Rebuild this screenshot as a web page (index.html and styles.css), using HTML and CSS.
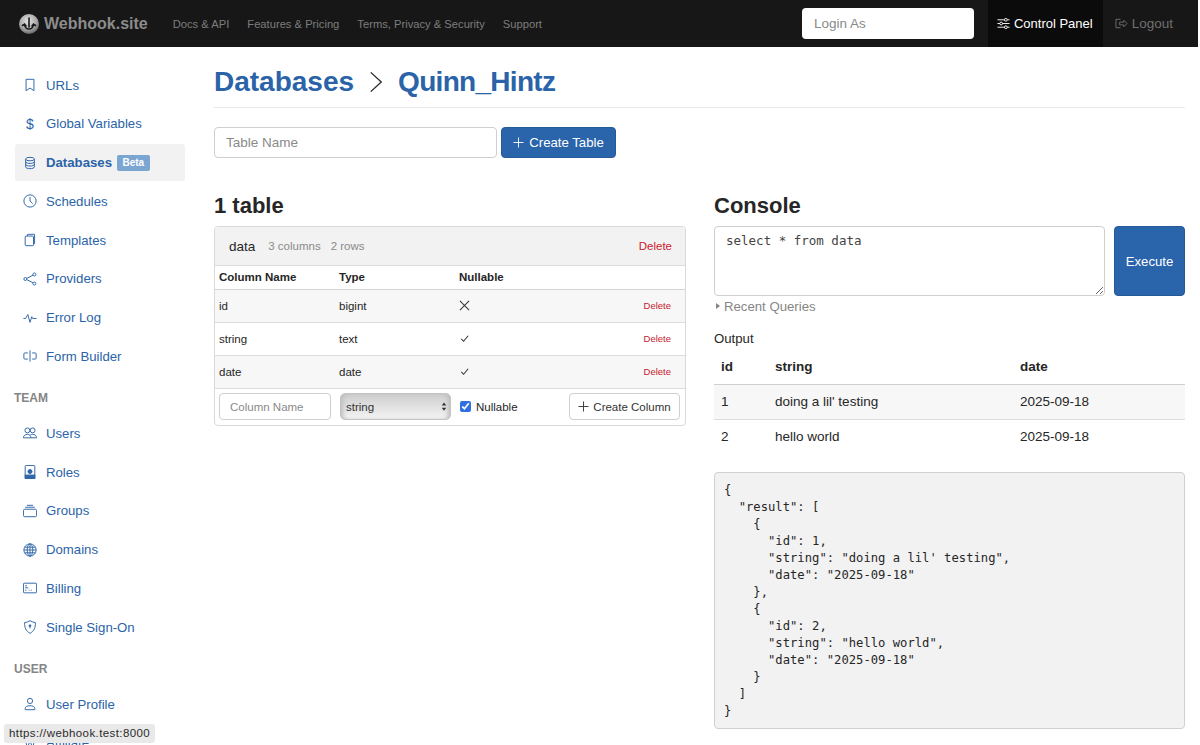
FILE: index.html
```html
<!DOCTYPE html>
<html lang="en">
<head>
    <meta charset="UTF-8">
    <meta name="viewport" content="width=device-width, initial-scale=1.0">
    <title>Databases - Webhook.site</title>
    <link rel="stylesheet" href="styles.css">
</head>
<body>
    <nav class="navbar">
        <a class="brand" href="#">
            <svg class="brand-logo" viewBox="0 0 20 20">
                <defs>
                    <radialGradient id="sphere" cx="45%" cy="35%" r="70%">
                        <stop offset="0%" stop-color="#e4e4e4"/>
                        <stop offset="60%" stop-color="#a8a8a8"/>
                        <stop offset="100%" stop-color="#5c5c5c"/>
                    </radialGradient>
                </defs>
                <circle cx="10" cy="10" r="10" fill="url(#sphere)"/>
                <path d="M10 4v9M5.500 10c0 3 2 5 4.500 5s4.500-2 4.500-5M3.500 11.500l2-1.500 1.500 2M16.500 11.500l-2-1.500-1.500 2" fill="none" stroke="#1a1a1a" stroke-width="1.600" stroke-linecap="round"/>
            </svg>
            Webhook.site
        </a>
        <a class="nav-link" href="#">Docs &amp; API</a>
        <a class="nav-link" href="#">Features &amp; Pricing</a>
        <a class="nav-link" href="#">Terms, Privacy &amp; Security</a>
        <a class="nav-link" href="#">Support</a>
        <input class="login-as" type="text" placeholder="Login As">
        <a class="nav-panel" href="#">
            <svg class="nav-icon" viewBox="0 0 14 14"><path d="M0.500 3h7.500M11 3h2.500M0.500 7h2.500M6 7h7.500M0.500 11h7.500M11 11h2.500"/><circle cx="9.500" cy="3" r="1.500"/><circle cx="4.500" cy="7" r="1.500"/><circle cx="9.500" cy="11" r="1.500"/></svg>
            Control Panel
        </a>
        <a class="nav-logout" href="#">
            <svg class="nav-icon" viewBox="0 0 14 14"><path d="M6 2.500H1v9h5M5 5.500h4.500V3.500L13 7l-3.500 3.500v-2H5z"/></svg>
            Logout
        </a>
    </nav>

    <div class="page">
        <aside class="sidebar">
            <a class="side-item" href="#">
                <svg class="side-icon" viewBox="0 0 16 16"><path d="M3.500 1.500h9v13L8 11.500l-4.500 3z"/></svg>
                URLs
            </a>
            <a class="side-item" href="#">
                <span class="side-glyph">$</span>
                Global Variables
            </a>
            <a class="side-item active" href="#">
                <svg class="side-icon" viewBox="0 0 16 16"><ellipse cx="8" cy="3.500" rx="5" ry="2"/><path d="M3 3.500v9c0 1.100 2.200 2 5 2s5-.900 5-2v-9M3 6.500c0 1.100 2.200 2 5 2s5-.900 5-2M3 9.500c0 1.100 2.200 2 5 2s5-.900 5-2"/></svg>
                Databases <span class="beta">Beta</span>
            </a>
            <a class="side-item" href="#">
                <svg class="side-icon" viewBox="0 0 16 16"><circle cx="8" cy="8" r="7"/><path d="M8 3.500V8l3 3"/></svg>
                Schedules
            </a>
            <a class="side-item" href="#">
                <svg class="side-icon" viewBox="0 0 16 16"><rect x="2.500" y="3.500" width="9.500" height="11" rx="1"/><path d="M5 3.500V2.300c0-.500.300-.800.800-.800h7.400v10.500c0 .500-.400.800-1.200.800"/></svg>
                Templates
            </a>
            <a class="side-item" href="#">
                <svg class="side-icon" viewBox="0 0 16 16"><circle cx="2.700" cy="8" r="1.700"/><circle cx="13" cy="2.800" r="1.700"/><circle cx="13" cy="13.200" r="1.700"/><path d="M4.300 7.300l7.200-3.700M4.300 8.700l7.200 3.700"/></svg>
                Providers
            </a>
            <a class="side-item" href="#">
                <svg class="side-icon" viewBox="0 0 16 16"><path d="M0.500 8.500h2.500L5.500 4l2.500 9 2-6.500 1 2H15.500"/></svg>
                Error Log
            </a>
            <a class="side-item" href="#">
                <svg class="side-icon" viewBox="0 0 16 16"><path d="M5.500 4.500H2c-.500 0-1 .400-1 1v5c0 .600.500 1 1 1h3.500M8 1.500v13M10.500 4.500H14c.500 0 1 .400 1 1v5c0 .600-.500 1-1 1h-3.500"/></svg>
                Form Builder
            </a>

            <div class="side-label">TEAM</div>
            <a class="side-item" href="#">
                <svg class="side-icon" viewBox="0 0 16 16"><circle cx="5" cy="5" r="2.800"/><circle cx="11" cy="5" r="2.800"/><path d="M0.500 13.500c0-2.500 2-4 4.500-4s4 1.500 4 4zM9 13.500h6.500c0-2.500-2-4-4.500-4-1 0-1.800.200-2.500.600"/></svg>
                Users
            </a>
            <a class="side-item" href="#">
                <svg class="side-icon" viewBox="0 0 16 16"><rect x="2.500" y="0.500" width="11" height="15" rx="1"/><circle class="fill" cx="8" cy="7.500" r="2.300"/><rect class="fill" x="2.500" y="11.500" width="11" height="4"/></svg>
                Roles
            </a>
            <a class="side-item" href="#">
                <svg class="side-icon" viewBox="0 0 16 16"><rect x="0.500" y="6" width="15" height="8.500" rx="1.500"/><path d="M2.500 3.700h11M4.500 1.500h7"/></svg>
                Groups
            </a>
            <a class="side-item" href="#">
                <svg class="side-icon" viewBox="0 0 16 16"><circle cx="8" cy="8" r="7"/><ellipse cx="8" cy="8" rx="3.200" ry="7"/><path d="M8 1v14M1 8h14M2 4.800h12M2 11.200h12"/></svg>
                Domains
            </a>
            <a class="side-item" href="#">
                <svg class="side-icon" viewBox="0 0 16 16"><rect x="0.500" y="2.500" width="15" height="11" rx="1"/><path d="M2.500 5.500h2M2.500 7.800h3.500M2.500 10.500h1.500M6.500 10.500h1M9 10.500h1"/></svg>
                Billing
            </a>
            <a class="side-item" href="#">
                <svg class="side-icon" viewBox="0 0 16 16"><path d="M8 0.800c2 1.300 4.300 2 6.200 2.200 0 5.500-1.200 9.500-6.200 12.200C3 12.500 1.800 8.500 1.800 3 3.700 2.800 6 2.100 8 .800z"/><circle class="fill" cx="8" cy="6.500" r="1"/><path d="M8 7v2.500"/></svg>
                Single Sign-On
            </a>

            <div class="side-label">USER</div>
            <a class="side-item" href="#">
                <svg class="side-icon" viewBox="0 0 16 16"><circle cx="8" cy="4.500" r="3"/><path d="M2.500 14.500v-1.500c0-2 2.500-3 5.500-3s5.500 1 5.500 3v1.500z"/></svg>
                User Profile
            </a>
            <a class="side-item" href="#">
                <svg class="side-icon" viewBox="0 0 16 16"><path d="M2 3l3 10 3-7 3 7 3-10"/></svg>
                Affiliate
            </a>
        </aside>

        <main class="content">
            <h1 class="page-title">
                <a href="#">Databases</a>
                <svg class="crumb-arrow" viewBox="0 0 16 26"><path d="M2 2l12 11L2 24"/></svg>
                <a class="crumb-current" href="#">Quinn_Hintz</a>
            </h1>

            <form class="create-table">
                <input class="field table-name" type="text" placeholder="Table Name">
                <button class="btn-primary" type="button">
                    <svg class="plus" viewBox="0 0 12 12"><path d="M6 0.500v11M0.500 6h11"/></svg>
                    Create Table
                </button>
            </form>

            <div class="columns">
                <section>
                    <h2>1 table</h2>
                    <div class="panel">
                        <div class="panel-head">
                            <span class="panel-name">data</span>
                            <span class="panel-meta">3 columns</span>
                            <span class="panel-meta">2 rows</span>
                            <a class="panel-delete" href="#">Delete</a>
                        </div>
                        <table class="col-table">
                            <thead>
                                <tr><th>Column Name</th><th>Type</th><th>Nullable</th><th></th></tr>
                            </thead>
                            <tbody>
                                <tr>
                                    <td>id</td><td>bigint</td>
                                    <td><svg class="flag" viewBox="0 0 12 12"><path d="M1 1l10 10M11 1L1 11"/></svg></td>
                                    <td class="row-delete"><a href="#">Delete</a></td>
                                </tr>
                                <tr>
                                    <td>string</td><td>text</td>
                                    <td><svg class="flag" viewBox="0 0 12 12"><path d="M2.500 6.500L5 9l5-6"/></svg></td>
                                    <td class="row-delete"><a href="#">Delete</a></td>
                                </tr>
                                <tr>
                                    <td>date</td><td>date</td>
                                    <td><svg class="flag" viewBox="0 0 12 12"><path d="M2.500 6.500L5 9l5-6"/></svg></td>
                                    <td class="row-delete"><a href="#">Delete</a></td>
                                </tr>
                            </tbody>
                        </table>
                        <div class="add-column">
                            <input class="field column-name" type="text" placeholder="Column Name">
                            <div class="select-wrap">
                                <select class="type-select">
                                    <option>string</option>
                                    <option>text</option>
                                    <option>bigint</option>
                                    <option>date</option>
                                </select>
                                <svg class="select-arrows" viewBox="0 0 8 12"><path d="M4 0.500L7 4.500H1zM4 11.500L1 7.500h6z"/></svg>
                            </div>
                            <label class="nullable"><input type="checkbox" checked> Nullable</label>
                            <button class="btn-default" type="button">
                                <svg class="plus" viewBox="0 0 12 12"><path d="M6 0.500v11M0.500 6h11"/></svg>
                                Create Column
                            </button>
                        </div>
                    </div>
                </section>

                <section>
                    <h2>Console</h2>
                    <div class="console-input">
                        <textarea class="field query" spellcheck="false">select * from data</textarea>
                        <button class="btn-primary execute" type="button">Execute</button>
                    </div>
                    <div class="recent"><span class="caret"></span>Recent Queries</div>
                    <div class="output-label">Output</div>
                    <table class="output-table">
                        <thead>
                            <tr><th>id</th><th>string</th><th>date</th></tr>
                        </thead>
                        <tbody>
                            <tr><td>1</td><td>doing a lil' testing</td><td>2025-09-18</td></tr>
                            <tr><td>2</td><td>hello world</td><td>2025-09-18</td></tr>
                        </tbody>
                    </table>
                    <pre class="json">{
  "result": [
    {
      "id": 1,
      "string": "doing a lil' testing",
      "date": "2025-09-18"
    },
    {
      "id": 2,
      "string": "hello world",
      "date": "2025-09-18"
    }
  ]
}</pre>
                </section>
            </div>
        </main>
    </div>

    <div class="status-tip">https://webhook.test:8000</div>
</body>
</html>
```

FILE: styles.css
```css
html, body {
    height: 100%;
}

body {
    margin: 0;
    overflow: hidden;
    background: #fff;
    color: #262626;
    font-family: "Liberation Sans", Arial, sans-serif;
    font-size: 13.200px;
}

a {
    color: #2a63a8;
    text-decoration: none;
}

/* top bar */
.navbar {
    display: flex;
    align-items: center;
    height: 47px;
    margin-right: 2px;
    padding-left: 19px;
    background: #171717;
    box-sizing: border-box;
}

.brand {
    display: flex;
    align-items: center;
    gap: 5px;
    margin-right: 25px;
    color: #8c8c8c;
    font-size: 16px;
    font-weight: bold;
}

.brand-logo {
    width: 20px;
    height: 20px;
}

.nav-link {
    margin-right: 18px;
    color: #7d7d7d;
    font-size: 11.200px;
}

.login-as {
    width: 172px;
    height: 31px;
    box-sizing: border-box;
    margin-left: auto;
    padding: 0 12px;
    border: 0;
    border-radius: 4px;
    background: #fff;
    font-family: inherit;
    font-size: 13.500px;
}

.login-as::placeholder {
    color: #8a8a8a;
}

.nav-panel {
    display: flex;
    align-items: center;
    gap: 4px;
    height: 47px;
    margin-left: 14px;
    padding: 0 10px 0 9px;
    background: #0b0b0b;
    color: #fff;
    font-size: 13px;
}

.nav-logout {
    display: flex;
    align-items: center;
    gap: 4px;
    margin-left: 12px;
    margin-right: 25px;
    color: #6f6f6f;
    font-size: 13.500px;
}

.nav-icon {
    width: 13px;
    height: 13px;
    fill: none;
    stroke: currentColor;
    stroke-width: 1;
}

/* page */
.page {
    display: flex;
}

.sidebar {
    flex: 0 0 170px;
    display: flex;
    flex-direction: column;
    gap: 1.250px;
    padding: 19.250px 0 0 15px;
    margin-right: 29px;
}

.side-item {
    flex: none;
    display: flex;
    align-items: center;
    height: 37.500px;
    padding-left: 8px;
    border-radius: 3px;
    box-sizing: border-box;
}

.side-item.active {
    background: #f2f2f2;
    font-weight: bold;
}

.side-icon {
    flex: none;
    width: 14px;
    height: 14px;
    margin-right: 9px;
    fill: none;
    stroke: #2f66a8;
    stroke-width: 1.100;
}

.side-icon .fill {
    fill: #2f66a8;
}

.side-glyph {
    flex: none;
    width: 14px;
    margin-right: 9px;
    text-align: center;
    font-size: 14px;
}

.side-label {
    height: 16px;
    margin: 14px 0 7px -1px;
    line-height: 16px;
    color: #858585;
    font-size: 12px;
    font-weight: bold;
}

.beta {
    margin-left: 5px;
    padding: 2.500px 5.500px;
    border-radius: 2px;
    background: #7ba6d2;
    color: #fff;
    font-size: 10px;
    font-weight: bold;
}

.content {
    flex: none;
    width: 971px;
}

.page-title {
    display: flex;
    align-items: center;
    gap: 15px;
    height: 61px;
    margin: 0 0 19px;
    padding-top: 9px;
    border-bottom: 1px solid #e8e8e8;
    font-size: 28px;
    font-weight: bold;
    box-sizing: border-box;
}

.crumb-current {
    letter-spacing: -0.700px;
}

.crumb-arrow {
    width: 14px;
    height: 24px;
    fill: none;
    stroke: #262626;
    stroke-width: 1.500;
}

.create-table {
    display: flex;
    gap: 4px;
    height: 31px;
}

.field {
    box-sizing: border-box;
    border: 1px solid #cfcfcf;
    border-radius: 4px;
    background: #fff;
    font-family: inherit;
    outline: none;
}

.field::placeholder {
    color: #8a8a8a;
}

.table-name {
    width: 283px;
    padding: 0 11px;
    font-size: 13.500px;
}

.btn-primary {
    display: flex;
    align-items: center;
    justify-content: center;
    gap: 5px;
    width: 115px;
    padding: 0;
    border: 1px solid #255a99;
    border-radius: 4px;
    background: #2a64ab;
    color: #fff;
    font-family: inherit;
    font-size: 13.200px;
}

.plus {
    width: 11px;
    height: 11px;
    fill: none;
    stroke: currentColor;
    stroke-width: 1;
}

.columns {
    display: grid;
    grid-template-columns: 472px 471px;
    gap: 28px;
    margin-top: 33px;
}

h2 {
    margin: 0 0 5px;
    height: 30px;
    line-height: 30px;
    color: #262626;
    font-size: 22px;
    font-weight: bold;
}

/* table card */
.panel {
    box-sizing: border-box;
    height: 200px;
    border: 1px solid #d9d9d9;
    border-radius: 4px;
    overflow: hidden;
}

.panel-head {
    display: flex;
    align-items: center;
    height: 38px;
    padding: 0 13px 0 14px;
    border-bottom: 1px solid #dcdcdc;
    background: #f2f2f2;
}

.panel-name {
    margin-right: 13px;
    font-size: 13.500px;
}

.panel-meta {
    margin-right: 10px;
    color: #8a8a8a;
    font-size: 11.500px;
}

.panel-delete {
    margin-left: auto;
    color: #c8202f;
    font-size: 11.500px;
}

.col-table {
    width: 100%;
    border-collapse: collapse;
    table-layout: fixed;
    font-size: 11.500px;
}

.col-table th:nth-child(-n+3) {
    width: 120px;
}

.col-table th {
    height: 23px;
    padding: 0 4px;
    border-bottom: 1px solid #d4d4d4;
    box-sizing: border-box;
    text-align: left;
}

.col-table td {
    height: 33px;
    padding: 0 4px;
    border-bottom: 1px solid #dcdcdc;
    box-sizing: border-box;
}

.col-table tbody tr:nth-child(odd) {
    background: #f7f7f7;
}

.flag {
    display: block;
    width: 11px;
    height: 11px;
    fill: none;
    stroke: #333;
    stroke-width: 1.100;
}

.col-table .row-delete {
    padding: 0 14px 2px 4px;
    text-align: right;
}

.row-delete a {
    color: #c8202f;
    font-size: 9.500px;
}

.add-column {
    display: flex;
    align-items: center;
    height: 36px;
    padding: 0 5px 0 4px;
}

.column-name {
    width: 112px;
    height: 27px;
    padding: 0 10px;
    font-size: 11.500px;
}

.select-wrap {
    position: relative;
    width: 111px;
    height: 27px;
    margin-left: 9px;
}

.type-select {
    appearance: none;
    width: 100%;
    height: 100%;
    padding: 0 5px;
    border: 1px solid #c4c4c4;
    border-radius: 5px;
    background: linear-gradient(#cdcdcd, #f4f4f4);
    box-shadow: inset 4px 0 4px -2px #bdbdbd, inset -4px 0 4px -2px #bdbdbd;
    color: #333;
    font-family: inherit;
    font-size: 11.500px;
}

.select-arrows {
    position: absolute;
    top: 8px;
    right: 4px;
    width: 6px;
    height: 11px;
    fill: #333;
}

.nullable {
    display: flex;
    align-items: center;
    gap: 5px;
    margin-left: 9px;
    font-size: 11.500px;
}

.nullable input {
    width: 11px;
    height: 11px;
    margin: 0;
    accent-color: #2f6fe0;
}

.btn-default {
    display: flex;
    align-items: center;
    justify-content: center;
    gap: 4px;
    width: 111px;
    height: 27px;
    margin-left: auto;
    padding: 0;
    border: 1px solid #cfcfcf;
    border-radius: 4px;
    background: #fff;
    color: #333;
    font-family: inherit;
    font-size: 11.500px;
}

/* console */
.console-input {
    display: flex;
    justify-content: space-between;
    height: 70px;
}

.query {
    width: 391px;
    height: 70px;
    padding: 6px 11px;
    color: #444;
    font-family: "DejaVu Sans Mono", monospace;
    font-size: 12.500px;
}

.execute {
    width: 71px;
    height: 70px;
}

.recent {
    display: flex;
    align-items: center;
    height: 20px;
    color: #858585;
}

.caret {
    margin: 0 4px 0 2px;
    border-left: 4px solid #858585;
    border-top: 3.500px solid transparent;
    border-bottom: 3.500px solid transparent;
}

.output-label {
    margin-top: 13px;
    line-height: 20px;
}

.output-table {
    width: 100%;
    border-collapse: collapse;
    table-layout: fixed;
    font-size: 13.500px;
}

.output-table th:nth-child(1) {
    width: 54px;
}

.output-table th:nth-child(2) {
    width: 245px;
}

.output-table th {
    height: 35px;
    padding: 0 7px;
    border-bottom: 1px solid #d0d0d0;
    box-sizing: border-box;
    text-align: left;
}

.output-table td {
    height: 35px;
    padding: 0 7px;
    box-sizing: border-box;
}

.output-table tbody tr:first-child {
    border-bottom: 1px solid #dcdcdc;
    background: #f7f7f7;
}

.json {
    box-sizing: border-box;
    height: 257px;
    margin: 18px 0 0;
    padding: 9px 9px;
    border: 1px solid #d0d0d0;
    border-radius: 4px;
    background: #f2f2f2;
    color: #262626;
    font-family: "DejaVu Sans Mono", monospace;
    font-size: 12.200px;
    line-height: 17px;
}

/* browser status bubble */
.status-tip {
    position: fixed;
    left: 4px;
    bottom: 2px;
    padding: 3px 5px 4px;
    border-radius: 3px;
    background: #e9e9e9;
    color: #2b2b2b;
    font-family: "Liberation Sans", Arial, sans-serif;
    font-size: 11.500px;
    letter-spacing: 0.400px;
}
```
